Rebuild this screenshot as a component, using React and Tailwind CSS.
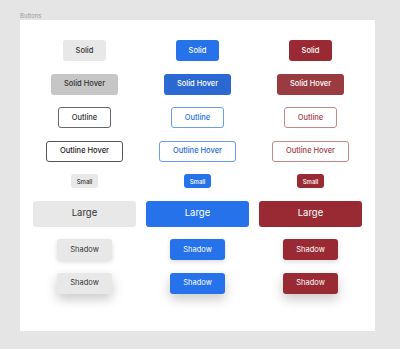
import React from 'react';

const variants = {
  gray: {
    solid: 'bg-[#e8e8e8] text-[#333]',
    hover: 'bg-[#c6c6c6] text-[#333]',
    outline: 'border border-[#666] text-[#333] bg-white',
    outlineHover: 'border border-[#555] text-[#222] bg-white',
  },
  blue: {
    solid: 'bg-[#2672ea] text-white',
    hover: 'bg-[#2b68d2] text-white',
    outline: 'border border-[#6a9cef] text-[#2672ea] bg-white',
    outlineHover: 'border border-[#6a9cef] text-[#2469db] bg-white',
  },
  red: {
    solid: 'bg-[#992a33] text-white',
    hover: 'bg-[#9a3b42] text-white',
    outline: 'border border-[#c9868b] text-[#a3404a] bg-white',
    outlineHover: 'border border-[#c9868b] text-[#a3404a] bg-white',
  },
};

const base = 'flex items-center justify-center rounded-[3px] whitespace-nowrap font-medium';

const Btn = ({ className, children }) => (
  <div className={`${base} ${className}`}>{children}</div>
);

const App = () => {
  const cols = ['gray', 'blue', 'red'];

  // one entry per row, rendered once for each colour
  const rows = [
    (k) => <Btn className={`h-[21px] px-[13px] text-[7.5px] ${variants[k].solid}`}>Solid</Btn>,
    (k) => <Btn className={`h-[21px] px-[13px] text-[7.5px] ${variants[k].hover}`}>Solid Hover</Btn>,
    (k) => <Btn className={`h-[21px] px-[13px] text-[7.5px] ${variants[k].outline}`}>Outline</Btn>,
    (k) => <Btn className={`h-[21px] px-[13px] text-[7.5px] ${variants[k].outlineHover}`}>Outline Hover</Btn>,
    (k) => <Btn className={`h-[14px] px-[6px] text-[6px] ${variants[k].solid}`}>Small</Btn>,
    (k) => <Btn className={`h-[26px] w-full text-[9.5px] !font-normal ${variants[k].solid}`}>Large</Btn>,
    (k) => <Btn className={`h-[21px] px-[13px] text-[7.5px] !font-normal shadow-[0_2px_5px_rgba(0,0,0,0.14)] ${variants[k].solid}`}>Shadow</Btn>,
    (k) => <Btn className={`h-[21px] px-[13px] text-[7.5px] !font-normal shadow-[0_5px_12px_rgba(0,0,0,0.22)] ${variants[k].solid}`}>Shadow</Btn>,
  ];

  return (
    <div className="w-[400px] h-[349px] bg-[#e5e5e5] pt-[11px] pl-[20px] pr-[25px] font-['Inter',sans-serif]">
      <div className="text-[6px] leading-[9px] h-[9px] text-[#999]">Buttons</div>
      <div className="h-[311px] bg-white px-[13px] pt-[20px] grid grid-cols-3 gap-x-[10px] gap-y-[12.5px] content-start justify-items-center">
        {rows.map((r, i) =>
          cols.map((k) => (
            <React.Fragment key={`${i}-${k}`}>{r(k)}</React.Fragment>
          ))
        )}
      </div>
    </div>
  );
};

export default App;
